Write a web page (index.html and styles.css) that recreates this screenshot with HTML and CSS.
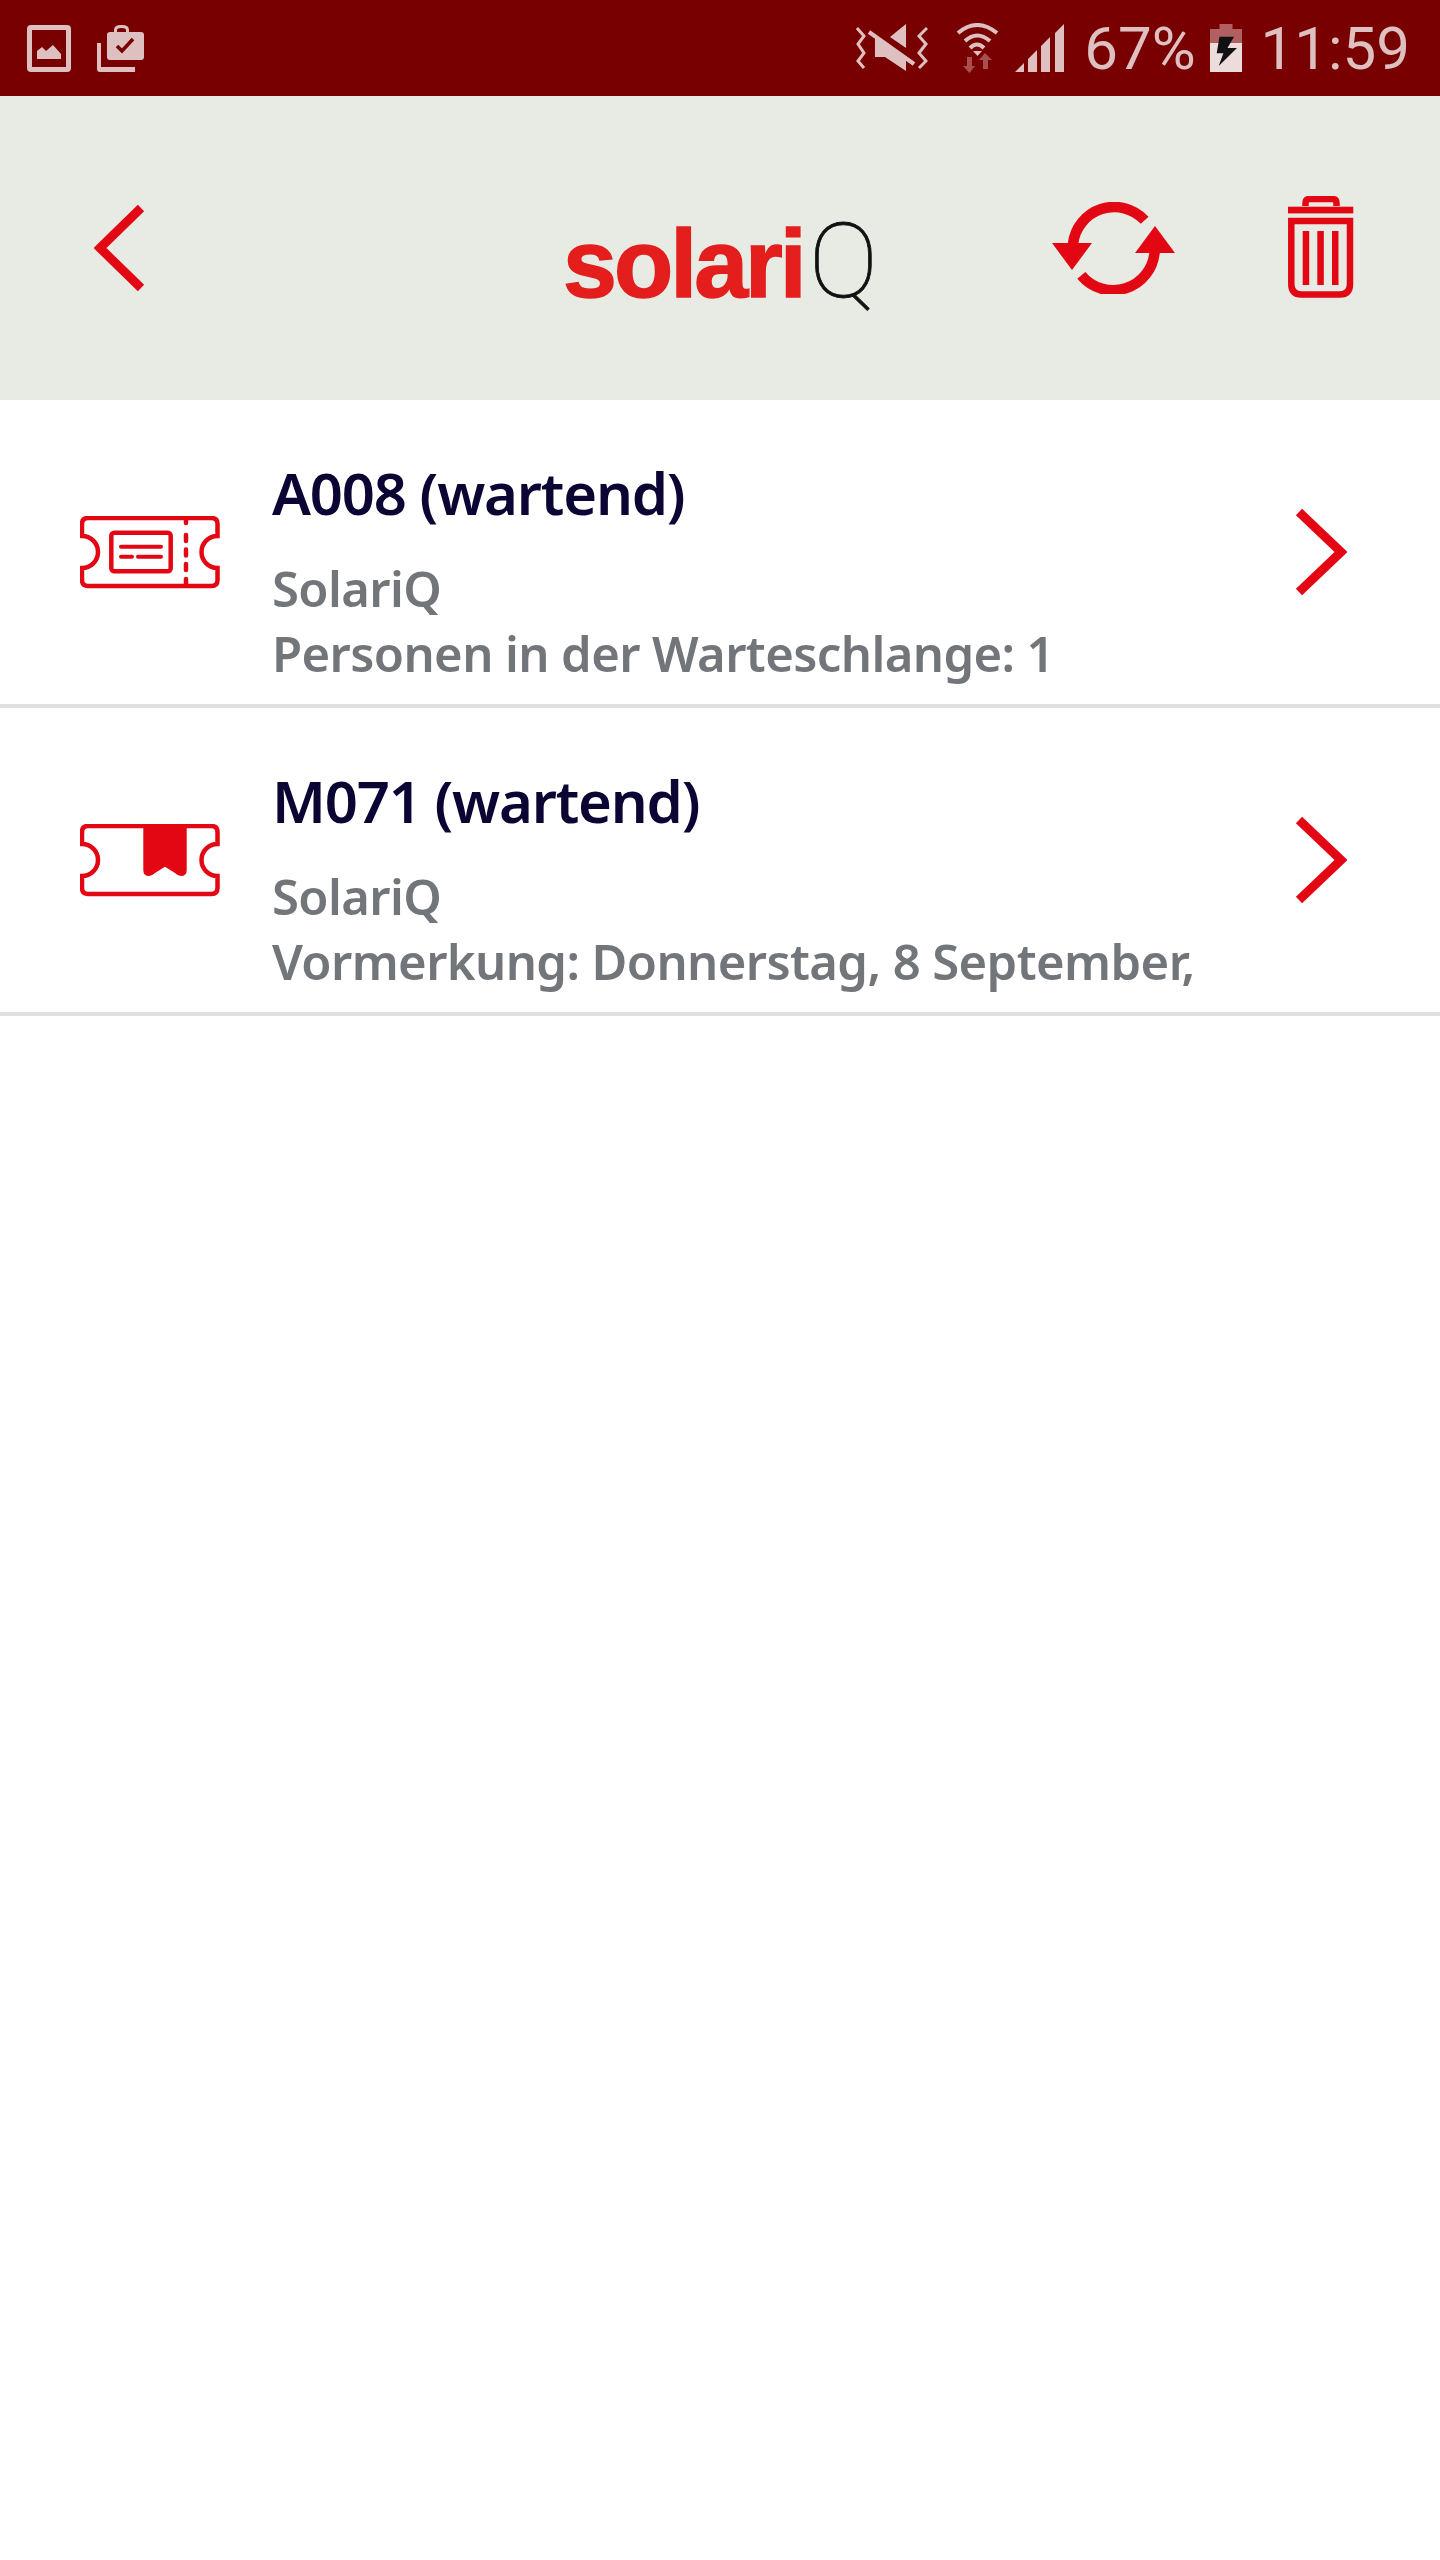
FILE: index.html
```html
<!DOCTYPE html>
<html lang="en">
<head>
    <meta charset="UTF-8">
    <meta name="viewport" content="width=device-width, initial-scale=1.0">
    <title>solariQ</title>
    <link rel="stylesheet" href="styles.css">
</head>
<body>
    <div class="status-bar">
        <div class="status-left">
            <svg class="st-image" width="44" height="47" viewBox="0 0 44 47">
                <path fill="#dfc0c0" fill-rule="evenodd" d="M4 0H40Q44 0 44 4V43Q44 47 40 47H4Q0 47 0 43V4Q0 0 4 0ZM5 5V42H39V5Z"/>
                <path fill="#dfc0c0" d="M10 34V26L15 22L19 26L26 20L34 29V34Z"/>
            </svg>
            <svg class="st-case" width="48" height="47" viewBox="0 0 48 47">
                <path fill="#dfc0c0" d="M0 18H4V42H38V47H3Q0 47 0 44Z"/>
                <path fill="#dfc0c0" fill-rule="evenodd" d="M13 7H17V5Q17 0 24 0H25Q32 0 32 5V7H44Q47 7 47 10V32Q47 35 44 35H13Q10 35 10 32V10Q10 7 13 7ZM20 7H29V5Q29 3 25 3H24Q20 3 20 5Z"/>
                <path fill="none" stroke="#780000" stroke-width="3.6" d="M20 21L25 26L36 14"/>
            </svg>
        </div>
        <div class="status-right">
            <svg class="st-mute" width="72" height="48" viewBox="0 0 72 48">
                <path fill="none" stroke="#dfc0c0" stroke-width="3" d="M1 4L8 12L2 20L8 29L2 37L8 44"/>
                <path fill="none" stroke="#dfc0c0" stroke-width="3" d="M71 4L63 12L70 20L63 29L70 37L63 44"/>
                <path fill="#dfc0c0" d="M50 0L34 13L50 24Z"/>
                <path fill="#dfc0c0" d="M19 12L50 36V47L29 33H19Z"/>
                <path fill="none" stroke="#dfc0c0" stroke-width="4" d="M13 8L58 40"/>
            </svg>
            <svg class="st-wifi" width="43" height="50" viewBox="0 0 43 50">
                <path fill="none" stroke="#dfc0c0" stroke-width="4" d="M2 10Q21 -6 41 10"/>
                <path fill="none" stroke="#dfc0c0" stroke-width="4" d="M9 18Q21 7 34 18"/>
                <path fill="none" stroke="#dfc0c0" stroke-width="4" d="M14 25Q21 18 28 25"/>
                <path fill="#dfc0c0" d="M17 28H26L21.500 33Z"/>
                <path fill="#a85050" d="M11 34H16V43H19L13.500 50L7 43H11Z"/>
                <path fill="#a85050" d="M27 46H32V37H36L29 30L23 37H27Z"/>
            </svg>
            <svg class="st-signal" width="49" height="48" viewBox="0 0 49 48">
                <path fill="#dfc0c0" d="M0 48L9 39V48ZM13 48V35L22 26V48ZM26 48V22L35 13V48ZM40 48V9L49 0V48Z"/>
            </svg>
            <span class="st-pct">67%</span>
            <svg class="st-batt" width="32" height="48" viewBox="0 0 32 48">
                <path fill="#b06060" d="M9.500 0H22.500V5H32V19H0V5H9.500Z"/>
                <path fill="#eddcdc" d="M0 19H32V48H0Z"/>
                <path fill="#111" d="M9.500 12.700H24L17.500 24H27L8.700 42L13.400 29.300H6.700Z"/>
            </svg>
            <span class="st-time">11:59</span>
        </div>
    </div>

    <header class="topbar">
        <svg class="back" width="52" height="88" viewBox="0 0 52 88">
            <path class="chev" d="M47 4L6 44L47 84"/>
        </svg>
        <div class="logo"><span class="logo-solari">solari</span><span class="logo-q">Q</span></div>
        <svg class="refresh" width="123" height="92" viewBox="0 0 123 92">
            <path class="ref-arc" d="M21 42A41.500 41.500 0 0 1 92.700 18.300"/>
            <path class="ref-arc" d="M102.600 50A41.500 41.500 0 0 1 29.300 73.300"/>
            <path class="red" d="M0 41H40L20 68Z"/>
            <path class="red" d="M83 51H123L103 24Z"/>
        </svg>
        <svg class="trash" width="66" height="102" viewBox="0 0 66 102">
            <path class="ln" d="M17.500 10V7Q17.500 3 22 3H44Q48.500 3 48.500 7V10"/>
            <rect class="red" x="0" y="10.700" width="65.300" height="6.700"/>
            <path class="ln" d="M3.300 25H62V88Q62 98.500 52 98.500H13.300Q3.300 98.500 3.300 88Z"/>
            <rect class="red" x="14.700" y="35" width="6.500" height="54"/>
            <rect class="red" x="29.300" y="35" width="6.500" height="54"/>
            <rect class="red" x="44" y="35" width="6.500" height="54"/>
        </svg>
    </header>

    <ul class="ticket-list">
        <li class="ticket">
            <svg class="ticket-icon" width="140" height="74" viewBox="0 0 140 74">
                <path class="tk" d="M8 2H131.500Q137.500 2 137.500 8V20A16 16 0 0 0 137.500 52V64Q137.500 70 131.500 70H8Q2 70 2 64V52A16 16 0 0 0 2 20V8Q2 2 8 2Z"/>
                <rect class="tk" x="31.300" y="16.700" width="59.400" height="38.600" rx="3"/>
                <path class="tk-thin" d="M41 30.700H81M41 40.700H52M58 40.700H81"/>
                <path class="tk-perf" d="M106 3V7M106 19V25M106 33.500V39.500M106 48V54M106 63V69"/>
            </svg>
            <div class="ticket-text">
                <h2>A008 (wartend)</h2>
                <p>SolariQ</p>
                <p>Personen in der Warteschlange: 1</p>
            </div>
            <svg class="go" width="52" height="88" viewBox="0 0 52 88">
                <path class="chev" d="M4 4L46 44L4 84"/>
            </svg>
        </li>
        <li class="ticket">
            <svg class="ticket-icon" width="140" height="74" viewBox="0 0 140 74">
                <path class="tk" d="M8 2H131.500Q137.500 2 137.500 8V20A16 16 0 0 0 137.500 52V64Q137.500 70 131.500 70H8Q2 70 2 64V52A16 16 0 0 0 2 20V8Q2 2 8 2Z"/>
                <path class="red" d="M63.300 2H106.700V46Q106.700 52 101 52Q98 52 95 49L85 42.700L75 49Q72 52 69 52Q63.300 52 63.300 46Z"/>
            </svg>
            <div class="ticket-text">
                <h2>M071 (wartend)</h2>
                <p>SolariQ</p>
                <p>Vormerkung: Donnerstag, 8 September,</p>
            </div>
            <svg class="go" width="52" height="88" viewBox="0 0 52 88">
                <path class="chev" d="M4 4L46 44L4 84"/>
            </svg>
        </li>
    </ul>
</body>
</html>
```

FILE: styles.css
```css
* {
    padding: 0;
    margin: 0;
    box-sizing: border-box;
}

html,
body {
    background: #fff;
}

body {
    height: 2560px;
    overflow: hidden;
}

svg {
    display: block;
    flex: none;
}

.status-bar {
    height: 96px;
    background: #780000;
    color: #dfc0c0;
    display: flex;
    align-items: center;
    justify-content: space-between;
    padding: 0 30px 0 27px;
    font-family: Roboto, sans-serif;
    font-size: 60px;
}

.status-left,
.status-right {
    display: flex;
    align-items: center;
}

.st-case {
    margin-left: 26px;
}

.st-wifi {
    margin-left: 28px;
}

.st-signal {
    margin-left: 16px;
}

.st-pct {
    margin-left: 20px;
}

.st-batt {
    margin-left: 14px;
}

.st-time {
    margin-left: 19px;
}

.topbar {
    height: 304px;
    background: #e8ebe4;
    display: flex;
    align-items: center;
    padding: 0 86px 0 94px;
}

.logo {
    margin: 30px auto 0 417px;
    display: flex;
    align-items: baseline;
    line-height: 80px;
}

.logo-solari {
    font-family: "Liberation Sans", sans-serif;
    font-weight: 700;
    font-size: 97px;
    letter-spacing: -3px;
    color: #e41e1c;
    -webkit-text-stroke: 1.5px #e41e1c;
}

.logo-q {
    font-family: Roboto, sans-serif;
    font-weight: 100;
    font-size: 104px;
    color: #111;
    margin-left: 5px;
    -webkit-text-stroke: 0.8px #111;
}

.refresh {
    margin-right: 113px;
}

.trash {
    margin-top: -3px;
}

.chev {
    fill: none;
    stroke: #e30613;
    stroke-width: 9;
}

.red {
    fill: #e30613;
}

.ref-arc {
    fill: none;
    stroke: #e30613;
    stroke-width: 10.500;
}

.ln {
    fill: none;
    stroke: #e30613;
    stroke-width: 6.500;
}

.ticket-list {
    list-style: none;
}

.ticket {
    height: 308px;
    border-bottom: 4px solid #e0e0e0;
    display: flex;
    align-items: center;
    padding: 0 93px 0 80px;
}

.ticket-icon {
    margin-right: 52px;
    margin-top: 2px;
}

.tk {
    fill: none;
    stroke: #e30613;
    stroke-width: 4.500;
}

.tk-thin {
    fill: none;
    stroke: #e30613;
    stroke-width: 4;
    stroke-linecap: round;
}

.tk-perf {
    fill: none;
    stroke: #e30613;
    stroke-width: 4.500;
    stroke-linecap: round;
}

.ticket-text {
    flex: 1;
    align-self: flex-start;
    padding-top: 53px;
    font-family: "Noto Sans", sans-serif;
    white-space: nowrap;
}

.ticket-text h2 {
    font-size: 58px;
    font-weight: 600;
    letter-spacing: -1.2px;
    line-height: 80px;
    color: #0a0533;
    margin-bottom: 23px;
}

.ticket-text p {
    font-size: 49px;
    font-weight: 600;
    letter-spacing: -0.6px;
    line-height: 65px;
    color: #72757a;
}
```
